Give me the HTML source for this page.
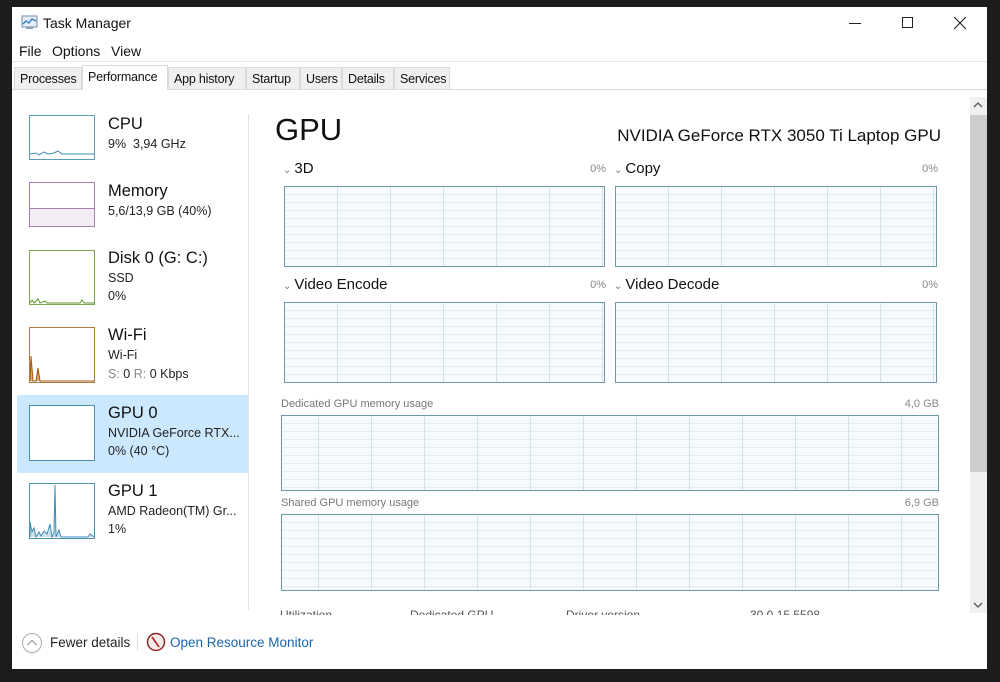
<!DOCTYPE html>
<html><head><meta charset="utf-8"><style>
*{margin:0;padding:0;box-sizing:border-box}
body{width:1000px;height:682px;background:#1c1c1c;position:relative;overflow:hidden;font-family:"Liberation Sans",sans-serif;color:#000}
.a{position:absolute;white-space:nowrap}
#win{position:absolute;left:12px;top:7px;width:975px;height:662px;background:#fff}
.tab{position:absolute;top:67px;height:23px;background:#f0f0f0;border:1px solid #dadada;font-size:12.5px;padding:4px 0 0 5px;color:#111;letter-spacing:-0.2px}
.th{position:absolute;width:66px;background:#fff}
.t1{position:absolute;left:108px;font-size:16.5px;color:#111}
.t2{position:absolute;left:108px;font-size:12.5px;color:#222}
.g{position:absolute;border:1px solid #6f98a6;background-color:#f7fbfd;
background-image:repeating-linear-gradient(to right,transparent 0,transparent 52px,#d4e3e8 52px,#d4e3e8 53px),repeating-linear-gradient(to bottom,transparent 0,transparent 7px,#e2edf1 7px,#e2edf1 8px)}
.lb{position:absolute;font-size:15px;color:#111}
.lb i{font-style:normal;font-size:10px;color:#777;margin-right:3px}
.pc{position:absolute;font-size:11px;color:#888;text-align:right}
.sm{position:absolute;font-size:11px;color:#777}
</style></head><body>
<div id="win"></div>
<svg class="a" style="left:21px;top:15px" width="17" height="15" viewBox="0 0 17 15"><rect x="1" y="1" width="15" height="11" fill="#e6eef5" stroke="#6d8da8"/><polyline points="2,9 5,6 8,8 11,4 15,6" fill="none" stroke="#2f7cc4" stroke-width="1.3"/><rect x="5" y="12" width="7" height="2" fill="#8aa0b2"/></svg>
<div class="a" style="left:43px;top:15px;font-size:14px;color:#111">Task Manager</div>
<div class="a" style="left:849px;top:23px;width:12px;height:1px;background:#222"></div>
<div class="a" style="left:902px;top:17px;width:11px;height:11px;border:1px solid #222"></div>
<svg class="a" style="left:954px;top:17px" width="12" height="12"><path d="M0 0L12 12M12 0L0 12" stroke="#222" stroke-width="1.1"/></svg>
<div class="a" style="left:19px;top:43px;font-size:14px;color:#111">File</div>
<div class="a" style="left:52px;top:43px;font-size:14px;color:#111">Options</div>
<div class="a" style="left:111px;top:43px;font-size:14px;color:#111">View</div>
<div class="a" style="left:12px;top:61px;width:975px;height:1px;background:#e6e6e6"></div>
<div class="a" style="left:12px;top:89px;width:975px;height:1px;background:#dadada"></div>
<div class="tab" style="left:14px;width:68px">Processes</div>
<div class="tab" style="left:82px;width:86px;top:65px;height:25px;background:#fff;border-bottom:none;padding-top:4px">Performance</div>
<div class="tab" style="left:168px;width:78px">App history</div>
<div class="tab" style="left:246px;width:54px">Startup</div>
<div class="tab" style="left:300px;width:42px">Users</div>
<div class="tab" style="left:342px;width:52px">Details</div>
<div class="tab" style="left:394px;width:56px">Services</div>
<div class="a" style="left:17px;top:395px;width:231px;height:78px;background:#cce8ff"></div>
<div class="a" style="left:248px;top:114px;width:1px;height:496px;background:#e4e4e4"></div>
<div class="th" style="left:29px;top:115px;height:45px;border:1px solid #5a9bb8"><svg width="64" height="43"><polyline points="0,38 6,37 9,39 14,36 18,38 24,37 28,35 32,38 40,38 64,38" fill="none" stroke="#3f8db5"/></svg></div>
<div class="t1" style="top:115px">CPU</div><div class="t2" style="top:137px">9%&nbsp; 3,94 GHz</div>
<div class="th" style="left:29px;top:182px;height:45px;border:1px solid #a77fb0"><div style="position:absolute;left:0;right:0;top:25px;bottom:0;background:#f4ecf5;border-top:1px solid #a77fb0"></div></div>
<div class="t1" style="top:182px">Memory</div><div class="t2" style="top:204px">5,6/13,9 GB (40%)</div>
<div class="th" style="left:29px;top:250px;height:55px;border:1px solid #7aa64e"><svg width="64" height="53"><polyline points="0,52 2,49 4,52 8,48 10,52 15,50 17,52 50,52 52,49 54,52 64,52" fill="none" stroke="#5c9a2a"/></svg></div>
<div class="t1" style="top:249px">Disk 0 (G: C:)</div><div class="t2" style="top:271px">SSD</div><div class="t2" style="top:289px">0%</div>
<div class="th" style="left:29px;top:327px;height:56px;border:1px solid #b07a3a"><svg width="64" height="54"><polyline points="0,53 1,28 3,53 6,53 8,40 10,53 64,53" fill="#d9a978" stroke="#a5540e"/></svg></div>
<div class="t1" style="top:326px">Wi-Fi</div><div class="t2" style="top:348px">Wi-Fi</div><div class="t2" style="top:367px"><span style="color:#888">S:</span> 0 <span style="color:#888">R:</span> 0 Kbps</div>
<div class="th" style="left:29px;top:405px;height:56px;border:1px solid #4f8fae"></div>
<div class="t1" style="top:404px">GPU 0</div><div class="t2" style="top:426px">NVIDIA GeForce RTX...</div><div class="t2" style="top:444px">0% (40 °C)</div>
<div class="th" style="left:29px;top:483px;height:56px;border:1px solid #4f8fae"><svg width="64" height="54"><polyline points="0,53 0,38 2,48 4,44 6,53 9,48 11,52 14,47 17,50 20,40 22,53 24,49 25,1 26,53 29,46 31,53 58,53 60,50 64,53" fill="#cfe4ee" stroke="#3f8db5"/></svg></div>
<div class="t1" style="top:482px">GPU 1</div><div class="t2" style="top:504px">AMD Radeon(TM) Gr...</div><div class="t2" style="top:522px">1%</div>
<div class="a" style="left:275px;top:112px;font-size:31px;color:#111">GPU</div>
<div class="a" style="left:560px;top:126px;width:381px;text-align:right;font-size:17px;color:#111">NVIDIA GeForce RTX 3050 Ti Laptop GPU</div>
<div class="lb" style="left:283px;top:160px"><i>⌄</i>3D</div><div class="pc" style="left:560px;width:46px;top:163px">0%</div>
<div class="lb" style="left:614px;top:160px"><i>⌄</i>Copy</div><div class="pc" style="left:890px;width:48px;top:163px">0%</div>
<div class="g" style="left:284px;top:186px;width:321px;height:81px"></div>
<div class="g" style="left:615px;top:186px;width:322px;height:81px"></div>
<div class="lb" style="left:283px;top:276px"><i>⌄</i>Video Encode</div><div class="pc" style="left:560px;width:46px;top:279px">0%</div>
<div class="lb" style="left:614px;top:276px"><i>⌄</i>Video Decode</div><div class="pc" style="left:890px;width:48px;top:279px">0%</div>
<div class="g" style="left:284px;top:302px;width:321px;height:81px"></div>
<div class="g" style="left:615px;top:302px;width:322px;height:81px"></div>
<div class="sm" style="left:281px;top:398px">Dedicated GPU memory usage</div><div class="pc" style="left:880px;width:59px;top:398px">4,0 GB</div>
<div class="g" style="left:281px;top:415px;width:658px;height:76px;background-position:-16px 0,0 0"></div>
<div class="sm" style="left:281px;top:497px">Shared GPU memory usage</div><div class="pc" style="left:880px;width:59px;top:497px">6,9 GB</div>
<div class="g" style="left:281px;top:514px;width:658px;height:77px;background-position:-16px 0,0 0"></div>
<div class="a" style="left:276px;top:608px;width:690px;height:7px;overflow:hidden;font-size:12px;color:#555"><span style="position:absolute;left:4px;top:0">Utilization</span><span style="position:absolute;left:134px;top:0">Dedicated GPU</span><span style="position:absolute;left:290px;top:0">Driver version</span><span style="position:absolute;left:474px;top:0">30.0.15.5598</span></div>
<div class="a" style="left:970px;top:97px;width:17px;height:516px;background:#f0f0f0"></div>
<div class="a" style="left:970px;top:115px;width:17px;height:357px;background:#cdcdcd"></div>
<svg class="a" style="left:973px;top:101px" width="10" height="8"><path d="M1 6L5 2L9 6" fill="none" stroke="#555" stroke-width="1.3"/></svg>
<svg class="a" style="left:973px;top:601px" width="10" height="8"><path d="M1 2L5 6L9 2" fill="none" stroke="#555" stroke-width="1.3"/></svg>
<svg class="a" style="left:21px;top:632px" width="22" height="22"><circle cx="11" cy="11" r="9.5" fill="none" stroke="#aaa"/><path d="M6.5 13L11 8.5L15.5 13" fill="none" stroke="#999" stroke-width="1.2"/></svg>
<div class="a" style="left:50px;top:635px;font-size:13.5px;color:#222">Fewer details</div>
<div class="a" style="left:137px;top:633px;width:1px;height:18px;background:#ddd"></div>
<svg class="a" style="left:146px;top:632px" width="20" height="20"><circle cx="10" cy="10" r="8.5" fill="#f3eaea" stroke="#8b2a2a" stroke-width="1.5"/><path d="M6 5L13 15" stroke="#b22" stroke-width="1.6"/></svg>
<div class="a" style="left:170px;top:635px;font-size:13.5px;color:#1c64a8">Open Resource Monitor</div>
</body></html>
